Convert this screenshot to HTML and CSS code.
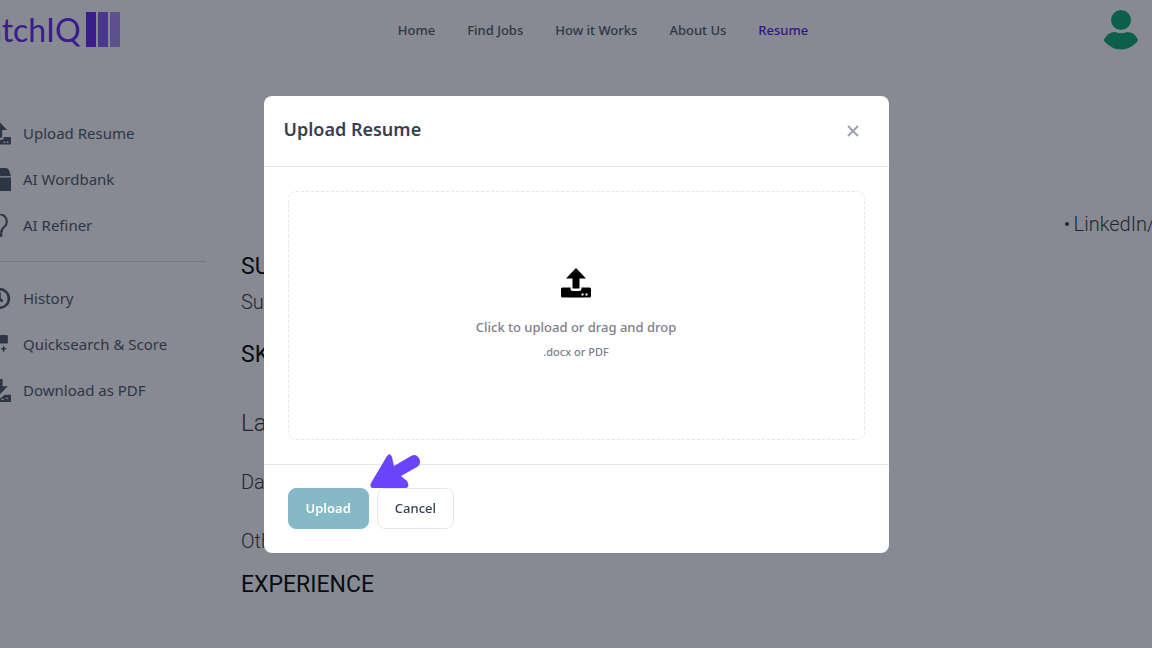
FILE: index.html
```html
<!DOCTYPE html>
<html lang="en">
<head>
<meta charset="utf-8">
<meta name="viewport" content="width=device-width, initial-scale=1">
<title>Upload Resume</title>
<link rel="stylesheet" href="styles.css">
</head>
<body>
<svg class="sprite" aria-hidden="true">
  <symbol id="upload" viewBox="0 0 30 30">
    <path d="M15 0 25 10.500H18.500V20.500H11.500V10.500H5Z"/>
    <path d="M1.500 19.500H9.500V20.500Q9.500 23 12 23H18Q20.500 23 20.500 20.500V19.500H28.500Q30 19.500 30 21V28Q30 29.500 28.500 29.500H1.500Q0 29.500 0 28V21Q0 19.500 1.500 19.500ZM20.500 25.500V27.500H22.500V25.500ZM24.500 25.500V27.500H26.500V25.500Z" fill-rule="evenodd"/>
  </symbol>
</svg>
<div class="page">
  <header class="topbar">
    <a class="logo" href="#">
      <span>atchIQ</span>
      <svg width="34" height="35" viewBox="0 0 34 35" aria-hidden="true"><path fill="#6320f0" d="M0 0h10v35H0z"/><path fill="#8159ef" d="M12 0h10v35H12z"/><path fill="#a78af0" d="M24 0h10v35H24z"/></svg>
    </a>
    <nav class="nav">
      <a href="#">Home</a>
      <a href="#">Find Jobs</a>
      <a href="#">How it Works</a>
      <a href="#">About Us</a>
      <a class="active" href="#">Resume</a>
    </nav>
    <a class="avatar" href="#" aria-label="Account">
      <svg width="34" height="40" viewBox="0 0 34 40"><circle cx="17" cy="10" r="10"/><path d="M1 28Q4 22 11 22Q17 24.500 23 22Q30 22 33 28Q35 30 33 32Q26 39.500 17 39.500Q8 39.500 1 32Q-1 30 1 28Z"/></svg>
    </a>
  </header>
  <div class="columns">
    <aside class="sidebar">
      <a href="#"><svg width="23" height="23"><use href="#upload"/></svg>Upload Resume</a>
      <a href="#"><svg width="23" height="23" viewBox="0 0 22 22"><path d="M4 0H17Q19 0 20 2L22 8H0L2 2Q3 0 4 0ZM0 9H22V22H0Z"/></svg>AI Wordbank</a>
      <a href="#"><svg width="23" height="23" viewBox="0 0 22 22"><path d="M8 16Q8 14 6 12A7 7 0 1 1 16 12Q13 14 13 17H8" fill="none" stroke="currentColor" stroke-width="2"/><circle cx="12" cy="20" r="2"/></svg>AI Refiner</a>
      <hr>
      <a href="#"><svg width="23" height="23" viewBox="0 0 22 22"><g fill="none" stroke="currentColor" stroke-width="2.500"><circle cx="11" cy="11" r="9"/><path d="M11 5V11L14 14"/></g></svg>History</a>
      <a href="#"><svg width="23" height="23" viewBox="0 0 22 22"><path d="M1 3h8v7H1zM11 3Q11 2 12 2H18Q19 2 19 3V9Q19 10 18 10H12Q11 10 11 9ZM1 12h8v7H1zM15 12l1 2 2 1-2 1-1 3-1-3-2-1 2-1z"/></svg>Quicksearch &amp; Score</a>
      <a href="#"><svg width="23" height="23" viewBox="0 0 22 22"><path d="M9 0h5v7h5l-8 8-8-8h6z"/><path fill-rule="evenodd" d="M0 15H6L11 19 16 15H22V22H0ZM13 19v1h2v-1zM17 18v1h2v-1z"/></svg>Download as PDF</a>
    </aside>
    <main class="resume">
      <p class="contact">LinkedIn/</p>
      <h2>SUMMARY</h2>
      <p class="summary">Summary</p>
      <h2>SKILLS</h2>
      <p class="lead">Languages</p>
      <p class="skill">Databases</p>
      <p class="skill">Others</p>
      <h2>EXPERIENCE</h2>
    </main>
  </div>
</div>
<div class="overlay">
  <section class="modal" role="dialog" aria-modal="true" aria-labelledby="title">
    <div class="modal-head">
      <h1 id="title">Upload Resume</h1>
      <button class="close" type="button" aria-label="Close"><svg width="12" height="12" viewBox="0 0 12 12"><path d="M1 1 11 11M11 1 1 11"/></svg></button>
    </div>
    <div class="modal-body">
      <button class="dropzone" type="button">
        <svg width="30" height="30" aria-hidden="true"><use href="#upload"/></svg>
        <span class="prompt">Click to upload or drag and drop</span>
        <span class="types">.docx or PDF</span>
      </button>
    </div>
    <div class="modal-foot">
      <button class="btn primary" type="button">Upload</button>
      <button class="btn" type="button">Cancel</button>
      <svg class="pointer" width="51" height="35" viewBox="0 0 51 35" aria-hidden="true"><path d="M1 29 17 2Q20-2 22 3L24 12 41 2Q46-1 49 4Q52 10 47 13L31 22 37 27Q41 34 34 34H4Q-1 34 1 29Z"/></svg>
    </div>
  </section>
</div>
</body>
</html>
```
FILE: styles.css
```css
* { box-sizing: border-box; }
body { margin: 0; font-family: "Noto Sans", "Open Sans", sans-serif; background: #fcfcfc; }
a { color: inherit; text-decoration: none; }
svg { display: block; flex: none; fill: currentColor; }
h1, h2, p { margin: 0; }
button { font: inherit; cursor: pointer; }
.sprite { position: absolute; width: 0; height: 0; }

.page { height: 100vh; overflow: hidden; }
.topbar { display: grid; grid-template-columns: 1fr auto 1fr; align-items: center; height: 59px; padding-right: 14px; }
.logo { display: flex; align-items: center; gap: 5px; margin-left: -14px; font: 32px Lato, sans-serif; color: #6320f0; }
.nav { display: flex; gap: 32px; margin-left: 68px; font-size: 13px; font-weight: 500; color: #4b5563; }
.nav .active { color: #5410e8; }
.avatar { justify-self: end; color: #07a86b; }

.columns { display: flex; }
.sidebar { flex: none; width: 218px; margin-left: -12px; padding-top: 51px; color: #4b5563; font-size: 15px; }
.sidebar a { display: flex; align-items: center; gap: 12px; height: 46px; }
.sidebar hr { height: 1px; margin: 13px 0; border: 0; background: #d3d6e0; }

.resume { flex: 1; min-width: 0; padding: 151px 0 0 35px; font-family: Roboto, sans-serif; font-size: 20px; font-weight: 300; line-height: 28px; color: #333; }
.contact { display: flex; align-items: center; justify-content: flex-end; gap: 5px; margin: 0 -3px 13px 0; }
.contact::before { content: ""; width: 4px; height: 4px; border-radius: 50%; background: currentColor; }
.resume h2 { font-size: 23px; font-weight: 400; line-height: 32px; color: #000; }
.summary { margin: 5px 0 23px; }
.resume .lead { margin-top: 38px; font-size: 24px; }
.skill { margin-top: 31px; }
.skill + h2 { margin-top: 14px; }

.overlay { position: fixed; inset: 0; display: flex; align-items: center; justify-content: center; background: rgba(17, 24, 39, 0.5); }
.modal { width: 100%; max-width: 625px; border-radius: 8px; background: #fff; }
.modal-head { display: flex; align-items: flex-end; justify-content: space-between; padding: 20px 24px 24px 20px; border-bottom: 1px solid #e5e7eb; }
.modal-head h1 { font-size: 18px; font-weight: 600; line-height: 26px; color: #374151; }
.close { padding: 5px 6px; border: 0; background: none; color: #9ca3af; }
.close path { fill: none; stroke: currentColor; stroke-width: 2; }
.modal-body { padding: 24px; }
.dropzone { display: flex; flex-direction: column; align-items: center; justify-content: center; width: 100%; min-height: 249px; padding: 0; border: 1px dashed #e5e7eb; border-radius: 8px; background: none; color: #7b808c; }
.dropzone svg { color: #000; }
.prompt { margin-top: 18px; font-size: 13px; font-weight: 500; line-height: 22px; }
.types { margin-top: 4px; font-size: 11px; font-weight: 500; line-height: 20px; }
.modal-foot { position: relative; display: flex; gap: 8px; padding: 23px 24px 24px; border-top: 1px solid #e5e7eb; }
.btn { padding: 0 17px; border: 1px solid #e5e7eb; border-radius: 8px; background: #fff; color: #374151; font-size: 13px; font-weight: 500; line-height: 39px; }
.primary { border-color: #86b9c6; background: #86b9c6; color: #fff; font-weight: 600; }
.pointer { position: absolute; top: -11px; left: 106px; color: #6a45fb; }
```
